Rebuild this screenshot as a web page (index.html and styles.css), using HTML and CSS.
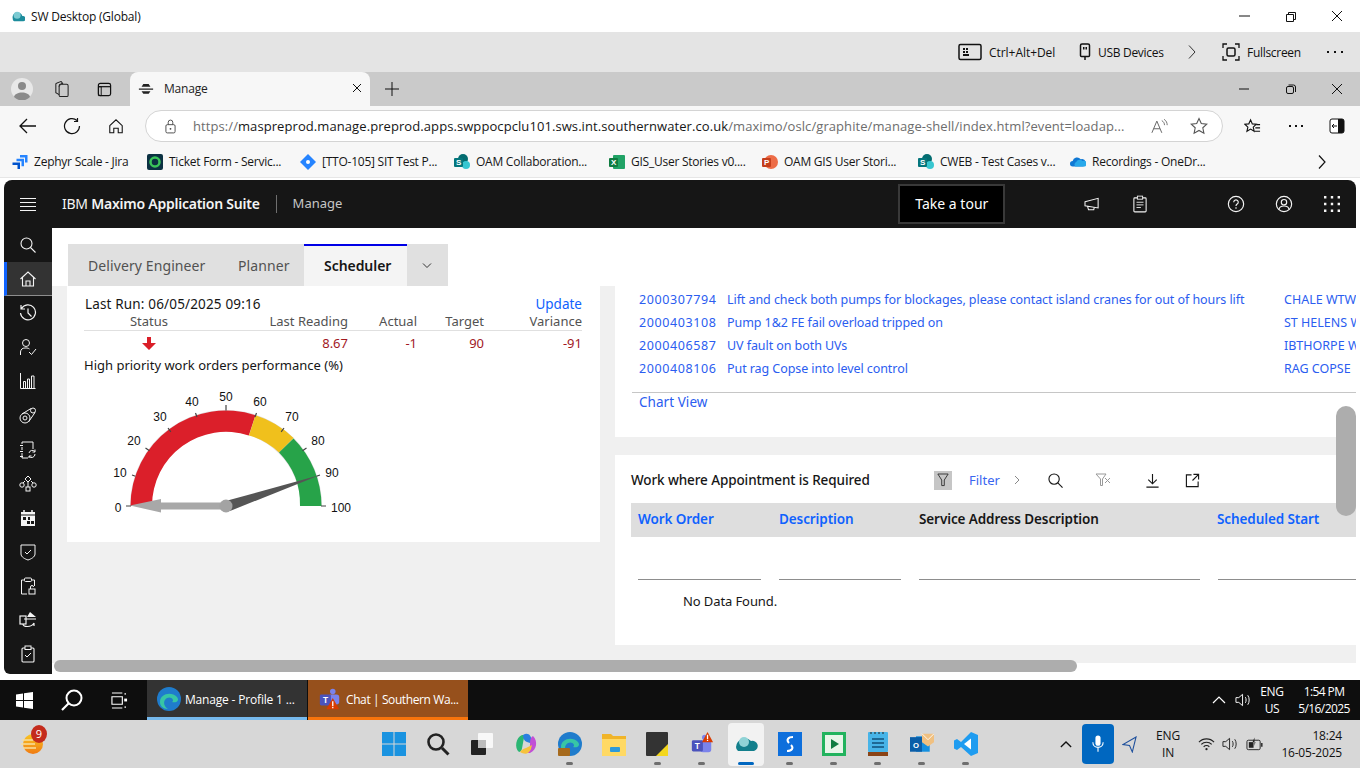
FILE: index.html
```html
<!DOCTYPE html>
<html lang="en">
<head>
<meta charset="utf-8">
<title>SW Desktop (Global)</title>
<link rel="stylesheet" href="styles.css">
</head>
<body>
<div class="screen">
  <header class="titlebar">
    <svg class="ti16" viewBox="0 0 16 16"><path d="M2 11a5.500 5.500 0 0 1 11-3 3 3 0 0 1 1 6H5a3 3 0 0 1-3-3z" fill="#1c8c9c"/><circle cx="7" cy="7" r="4" fill="#7ccad2"/></svg>
    <span class="title-text">SW Desktop (Global)</span>
    <div class="win-btns">
      <svg viewBox="0 0 46 32"><path d="M17 16h11" stroke="#111" fill="none"/></svg>
      <svg viewBox="0 0 46 32"><path d="M18.500 14.500h7v7h-7zM20.500 14.500v-2h7v7h-2" stroke="#111" fill="none"/></svg>
      <svg viewBox="0 0 46 32"><path d="M18 11l10 10M28 11L18 21" stroke="#111" fill="none"/></svg>
    </div>
  </header>

  <div class="vmbar">
    <svg class="vm-kbd" viewBox="0 0 24 18"><rect x="1" y="1.500" width="22" height="15" rx="1.500" fill="none" stroke="#111" stroke-width="1.500"/><path d="M5 5h2v2H5zM8 5h2v2H8zM5 8h2v2H5zM8 8h2v2H8zM5 11h6v2H5z" fill="#111"/></svg>
    <span class="vm-label vm-ctrl">Ctrl+Alt+Del</span>
    <svg class="vm-usb" viewBox="0 0 12 18"><path d="M1.500 2.500a1.500 1.500 0 0 1 1.500-1.500h6a1.500 1.500 0 0 1 1.500 1.500v10a1 1 0 0 1-1 1h-7a1 1 0 0 1-1-1zM6 13.500v3.500" fill="none" stroke="#111" stroke-width="1.500"/><path d="M4 4h1.500v2.500H4zM6.500 4H8v2.500H6.500z" fill="#111"/></svg>
    <span class="vm-label vm-usbt">USB Devices</span>
    <svg class="vm-chev" viewBox="0 0 10 16"><path d="M2 1.500L8 8l-6 6.500" fill="none" stroke="#333"/></svg>
    <svg class="vm-full" viewBox="0 0 18 18"><path d="M1 5V1h4M13 1h4v4M17 13v4h-4M5 17H1v-4" fill="none" stroke="#111" stroke-width="1.300"/><rect x="5" y="5" width="8" height="8" rx="1.500" fill="none" stroke="#111" stroke-width="1.500"/></svg>
    <span class="vm-label vm-fullt">Fullscreen</span>
    <span class="vm-dots"><i></i><i></i><i></i></span>
  </div>

  <div class="tabstrip">
    <svg class="edge-avatar" viewBox="0 0 22 22"><circle cx="11" cy="11" r="11" fill="#e8e8e8"/><circle cx="11" cy="8" r="4" fill="#8a8a8a"/><path d="M3 19c1-6 15-6 16 0a11 11 0 0 1-16 0z" fill="#8a8a8a"/></svg>
    <svg class="edge-coll" viewBox="0 0 18 18"><rect x="6.500" y="4" width="9.500" height="13" rx="1.500" fill="none" stroke="#222" stroke-width="1.100"/><path d="M6.500 15L3 13V4a1 1 0 0 1 .7-1L8 1.200a1 1 0 0 1 1.200.5L10.500 4" fill="none" stroke="#222" stroke-width="1.100"/><path d="M9 2.500c0 3-2.500 1.500-2.500 4" fill="none" stroke="#222"/></svg>
    <svg class="edge-vert" viewBox="0 0 16 16"><rect x="1.500" y="1.500" width="13" height="13" rx="2" fill="none" stroke="#111" stroke-width="1.300"/><path d="M1.500 5h13" stroke="#111" stroke-width="1.300"/><path d="M1.500 5h3v9.500h-3z" fill="none" stroke="#111"/></svg>
    <div class="edge-tab">
      <svg class="bee" viewBox="0 0 18 12"><path d="M6 1h6l2 3H4zM1 6h16v1.500H1zM4 9h10l-2 3H6z" fill="#222"/></svg>
      <span>Manage</span>
      <svg class="tab-x" viewBox="0 0 10 10"><path d="M1 1l8 8M9 1L1 9" stroke="#111" fill="none"/></svg>
    </div>
    <svg class="tab-plus" viewBox="0 0 14 14"><path d="M7 0v14M0 7h14" stroke="#111" fill="none"/></svg>
    <div class="win-btns">
      <svg viewBox="0 0 46 34"><path d="M17 17h10" stroke="#111" fill="none"/></svg>
      <svg viewBox="0 0 46 34"><rect x="18.500" y="14.500" width="7" height="7" rx="1.500" stroke="#111" fill="none"/><path d="M20.500 13h5a2 2 0 0 1 2 2v5" stroke="#111" fill="none"/></svg>
      <svg viewBox="0 0 46 34"><path d="M18 12l10 10M28 12L18 22" stroke="#111" fill="none"/></svg>
    </div>
  </div>

  <div class="addrbar">
    <svg class="nav-back" viewBox="0 0 18 16"><path d="M17 8H1.500M8 1L1 8l7 7" fill="none" stroke="#111" stroke-width="1.300"/></svg>
    <svg class="nav-reload" viewBox="0 0 18 18"><path d="M14 3.500A7.500 7.500 0 1 0 16.500 9M14.500 1v3.500H11" fill="none" stroke="#111" stroke-width="1.200"/></svg>
    <svg class="nav-home" viewBox="0 0 18 18"><path d="M2 8l7-6.500L16 8v8h-4.500v-5h-5v5H2z" fill="none" stroke="#111" stroke-width="1.200"/></svg>
    <div class="pill">
      <svg class="lock" viewBox="0 0 12 16"><rect x="1" y="6" width="10" height="9" rx="1.500" fill="none" stroke="#444"/><path d="M3.500 6V3.500a2.500 2.500 0 0 1 5 0V6" fill="none" stroke="#444"/><circle cx="6" cy="10.500" r="1" fill="#444"/></svg>
      <span class="url"><span class="url-dim">https://</span><span class="url-host">maspreprod.manage.preprod.apps.swppocpclu101.sws.int.southernwater.co.uk</span><span class="url-dim">/maximo/oslc/graphite/manage-shell/index.html?event=loadap...</span></span>
      <svg class="read" viewBox="0 0 20 16"><path d="M1 15L6.500 2 12 15M3 10.500h7" fill="none" stroke="#666" stroke-width="1.100"/><path d="M12 1.500c2 1 3 3 3 5M14.500 0c2.500 1.500 3.500 4 3.500 6.500" fill="none" stroke="#666"/></svg>
      <svg class="star" viewBox="0 0 18 18"><path d="M9 1.500l2.300 5 5.500.6-4 3.700 1.100 5.400L9 13.500l-4.900 2.700 1.100-5.400-4-3.700 5.500-.6z" fill="none" stroke="#555" stroke-width="1.100"/></svg>
    </div>
    <svg class="favs" viewBox="0 0 18 18"><path d="M7 2l1.800 4.200 4.200.4-3.200 3 1 4.400L7 11.700 3.100 14l1-4.400-3.200-3 4.200-.4z" fill="none" stroke="#111" stroke-width="1.200"/><path d="M13 7h4M12 10.500h5M11.500 14h5.500" stroke="#111" stroke-width="1.200"/></svg>
    <span class="addr-dots"><i></i><i></i><i></i></span>
    <svg class="split" viewBox="0 0 16 16"><rect x="1" y="1" width="14" height="14" rx="2" fill="#fff" stroke="#111"/><path d="M9 1h4a2 2 0 0 1 2 2v10a2 2 0 0 1-2 2H9z" fill="#111"/><path d="M8 8H3M5 6L3 8l2 2" stroke="#111" fill="none"/></svg>
  </div>

  <nav class="bookmarks">
    <div class="bm"><svg viewBox="0 0 16 16"><path d="M8 1h7.500v7.500h-2.500V3.500H8z" fill="#2684ff"/><path d="M4.500 4.700h7.500v7.500H9.500V7.200H4.500z" fill="#2684ff"/><path d="M.5 8.500H8V15H5.500v-4H.5z" fill="#0052cc"/></svg><span>Zephyr Scale - Jira</span></div>
    <div class="bm"><svg viewBox="0 0 16 16"><rect width="16" height="16" rx="2" fill="#0b3142"/><circle cx="8" cy="8" r="4.500" fill="none" stroke="#3bc55a" stroke-width="2.500"/></svg><span>Ticket Form - Servic...</span></div>
    <div class="bm"><svg viewBox="0 0 16 16"><path d="M8 0l8 8-8 8-8-8z" fill="#2684ff"/><circle cx="8" cy="8" r="2" fill="#fff"/></svg><span>[TTO-105] SIT Test P...</span></div>
    <div class="bm"><svg viewBox="0 0 16 16"><circle cx="9" cy="5" r="5" fill="#036c70"/><circle cx="12" cy="11" r="4" fill="#37c6d0"/><rect y="4" width="9" height="9" rx="1" fill="#04767c"/><text x="4.500" y="11" class="bm-letter">S</text></svg><span>OAM Collaboration...</span></div>
    <div class="bm"><svg viewBox="0 0 16 16"><rect x="4" y="1" width="12" height="14" rx="1" fill="#21a366"/><rect y="4" width="9" height="9" rx="1" fill="#107c41"/><text x="4.500" y="11" class="bm-letter">X</text></svg><span>GIS_User Stories v0....</span></div>
    <div class="bm"><svg viewBox="0 0 16 16"><circle cx="9" cy="8" r="7" fill="#ed6c47"/><rect y="4" width="9" height="9" rx="1" fill="#c43e1c"/><text x="4.500" y="11" class="bm-letter">P</text></svg><span>OAM GIS User Stori...</span></div>
    <div class="bm"><svg viewBox="0 0 16 16"><circle cx="9" cy="5" r="5" fill="#036c70"/><circle cx="12" cy="11" r="4" fill="#37c6d0"/><rect y="4" width="9" height="9" rx="1" fill="#04767c"/><text x="4.500" y="11" class="bm-letter">S</text></svg><span>CWEB - Test Cases v...</span></div>
    <div class="bm"><svg viewBox="0 0 18 16"><path d="M3 13a3 3 0 0 1 0-6 5 5 0 0 1 9-2 4 4 0 0 1 3 8z" fill="#0f78d4"/><path d="M6 13a3 3 0 0 1 1-5 4 4 0 0 1 7-1 3 3 0 0 1 3 6z" fill="#28a8ea"/></svg><span>Recordings - OneDr...</span></div>
    <svg class="bm-more" viewBox="0 0 10 16"><path d="M2 1.500L8 8l-6 6.500" fill="none" stroke="#111" stroke-width="1.200"/></svg>
  </nav>

  <section class="app-wrap">
    <div class="app">
      <div class="appbar">
        <svg class="ham" viewBox="0 0 16 13"><path d="M0 .5h16M0 4.500h16M0 8.500h16M0 12.500h16" stroke="#f4f4f4" fill="none"/></svg>
        <span class="brand">IBM <b>Maximo Application Suite</b></span>
        <span class="brand-div"></span>
        <span class="brand-app">Manage</span>
        <button class="tour">Take a tour</button>
        <svg class="hd-ico hd-mega" viewBox="0 0 18 16"><path d="M1 5.500l15-4v11l-15-2.500zM4 11l1 3.500h6l.5-2M16 1.500v11" fill="none" stroke="#f4f4f4" stroke-width="1.200"/></svg>
        <svg class="hd-ico hd-clip" viewBox="0 0 16 20"><rect x="1" y="3" width="14" height="16" rx="1" fill="none" stroke="#f4f4f4" stroke-width="1.200"/><rect x="5" y="1" width="6" height="3.500" fill="#161616" stroke="#f4f4f4"/><path d="M4 8h8M4 11h8M4 14h5" stroke="#f4f4f4"/></svg>
        <svg class="hd-ico hd-help" viewBox="0 0 20 20"><circle cx="10" cy="10" r="8.500" fill="none" stroke="#f4f4f4" stroke-width="1.300"/><path d="M7.500 8a2.500 2.500 0 1 1 3.800 2.100c-.9.600-1.300 1-1.300 2" fill="none" stroke="#f4f4f4" stroke-width="1.300"/><circle cx="10" cy="14.500" r=".9" fill="#f4f4f4"/></svg>
        <svg class="hd-ico hd-user" viewBox="0 0 20 20"><circle cx="10" cy="10" r="8.500" fill="none" stroke="#f4f4f4" stroke-width="1.300"/><circle cx="10" cy="8" r="3" fill="none" stroke="#f4f4f4" stroke-width="1.300"/><path d="M4.500 16c.5-5 10.500-5 11 0" fill="none" stroke="#f4f4f4" stroke-width="1.300"/></svg>
        <svg class="hd-ico hd-grid" viewBox="0 0 16 16"><path d="M0 0h2.400v2.400H0zM6.800 0h2.400v2.400H6.800zM13.600 0H16v2.400h-2.400zM0 6.800h2.400v2.400H0zM6.800 6.800h2.400v2.400H6.800zM13.600 6.800H16v2.400h-2.400zM0 13.600h2.400V16H0zM6.800 13.600h2.400V16H6.800zM13.600 13.600H16V16h-2.400z" fill="#f4f4f4"/></svg>
      </div>
      <div class="app-body">
        <aside class="rail">
          <div class="rail-item"><svg viewBox="0 0 16 16"><circle cx="6.500" cy="6.500" r="5.500" fill="none" stroke="#f4f4f4" stroke-width="1.100"/><path d="M10.500 10.500L15.500 15.500" stroke="#f4f4f4" stroke-width="1.100"/></svg></div>
          <div class="rail-item rail-active"><svg viewBox="0 0 16 16"><path d="M.5 8L8 1l7.500 7M2.500 6.500V15h11V6.500M6 15v-5h4v5" fill="none" stroke="#f4f4f4" stroke-width="1.100"/></svg></div>
          <div class="rail-item"><svg class="r18" viewBox="0 0 18 18"><path d="M2.500 4.500A7.500 7.500 0 1 1 1.500 9M2 1v4h4M9 4.500V9l3.500 3.500" fill="none" stroke="#f4f4f4" stroke-width="1.200"/></svg></div>
          <div class="rail-item"><svg class="r18" viewBox="0 0 18 18"><circle cx="7" cy="5" r="3.500" fill="none" stroke="#f4f4f4"/><path d="M1.500 17v-3a4.500 4.500 0 0 1 4.500-4h2a5 5 0 0 1 2.500 1M10 14l2.500 2.500L17 11" fill="none" stroke="#f4f4f4"/></svg></div>
          <div class="rail-item"><svg viewBox="0 0 16 16"><path d="M.5 0v15.500H15.500" fill="none" stroke="#f4f4f4"/><path d="M3.500 8.500h2v7h-2zM7.500 6h2v9.500h-2zM11.500 3h2.500v12.500h-2.500z" fill="none" stroke="#f4f4f4"/></svg></div>
          <div class="rail-item"><svg class="r18" viewBox="0 0 18 18"><circle cx="6" cy="11" r="5" fill="none" stroke="#f4f4f4"/><circle cx="6" cy="11" r="2" fill="none" stroke="#f4f4f4"/><circle cx="14" cy="3.500" r="2.500" fill="none" stroke="#f4f4f4"/><path d="M3 7l9-5.500M9.500 15l6.500-9.500" fill="none" stroke="#f4f4f4"/></svg></div>
          <div class="rail-item"><svg class="r18" viewBox="0 0 16 18"><path d="M2 3V1h11v7M2 6v3M2 12v5h6M0 4.500h3M0 10.500h3M0 15.500h3" fill="none" stroke="#f4f4f4"/><path d="M15 13a3.500 3.500 0 0 1-6 2.500M9 12a3.500 3.500 0 0 1 6-1.500M15 8.500V11h-2.500M9 17v-2h2.500" fill="none" stroke="#f4f4f4"/></svg></div>
          <div class="rail-item"><svg class="r18" viewBox="0 0 18 16"><path d="M9 0l3 3-3 3-3-3zM9 6v5M6 5L4 7M12 5l2 2" fill="none" stroke="#f4f4f4"/><circle cx="3" cy="9" r="2.200" fill="none" stroke="#f4f4f4"/><circle cx="15" cy="9" r="2.200" fill="none" stroke="#f4f4f4"/><rect x="7" y="11" width="4" height="4" fill="none" stroke="#f4f4f4"/></svg></div>
          <div class="rail-item"><svg viewBox="0 0 16 16"><path d="M1 2h14v14H1z" fill="#f4f4f4"/><path d="M4 0v3M12 0v3" stroke="#f4f4f4" stroke-width="1.500"/><path d="M1 5h14" stroke="#161616"/><path d="M3 7h3v3H3zM8 7h2v3H8zM7 11h3v3H7zM11 11h3v3h-3z" fill="#161616"/></svg></div>
          <div class="rail-item"><svg class="r18" viewBox="0 0 16 18"><path d="M1 2h14v9c0 3-4 5-7 6-3-1-7-3-7-6z" fill="none" stroke="#f4f4f4"/><path d="M5 9l2 2 4-4" fill="none" stroke="#f4f4f4"/></svg></div>
          <div class="rail-item"><svg class="r18" viewBox="0 0 16 18"><path d="M4 3H1.500v14H7M12 3h2.500v6" fill="none" stroke="#f4f4f4"/><rect x="4.500" y="1" width="7" height="3.500" rx="1" fill="none" stroke="#f4f4f4"/><rect x="9" y="12" width="6" height="5" fill="none" stroke="#f4f4f4"/><path d="M10.500 12v-2a1.500 1.500 0 0 1 3 0" fill="none" stroke="#f4f4f4"/></svg></div>
          <div class="rail-item"><svg class="r18" viewBox="0 0 18 18"><rect x="1" y="5" width="6" height="8" fill="none" stroke="#f4f4f4" stroke-width="1.200"/><path d="M11 1l6 5H8z" fill="#f4f4f4"/><path d="M8 8h9M4 13c0 3 8 4 11-1M15 12v3M13 8h-8" fill="none" stroke="#f4f4f4" stroke-width="1.200"/></svg></div>
          <div class="rail-item"><svg class="r18" viewBox="0 0 14 18"><rect x="1" y="3" width="12" height="14" rx="1" fill="none" stroke="#f4f4f4" stroke-width="1.100"/><rect x="4" y="1" width="6" height="3.500" fill="#161616" stroke="#f4f4f4"/><path d="M4 10l2 2 4-4" fill="none" stroke="#f4f4f4"/></svg></div>
        </aside>
        <main class="main">
          <div class="tabs">
            <div class="tab tab-de">Delivery Engineer</div>
            <div class="tab tab-pl">Planner</div>
            <div class="tab tab-on">Scheduler</div>
            <div class="tab tab-more"><svg viewBox="0 0 10 6"><path d="M1 .5L5 4.500 9 .5" fill="none" stroke="#333"/></svg></div>
          </div>
          <div class="columns">
            <article class="card-left">
              <div class="run-row"><span class="run-text">Last Run: 06/05/2025 09:16</span><a class="update">Update</a></div>
              <div class="kpi-grid kpi-head">
                <span class="kpi-status">Status</span><span>Last Reading</span><span>Actual</span><span>Target</span><span>Variance</span>
              </div>
              <div class="kpi-grid kpi-data">
                <span class="kpi-status"><svg class="down" viewBox="0 0 14 13"><path d="M5 0h4v6h5l-7 7-7-7h5z" fill="#da1e28"/></svg></span><span>8.67</span><span>-1</span><span>90</span><span>-91</span>
              </div>
              <div class="kpi-title">High priority work orders performance (%)</div>
              <svg class="gauge" viewBox="84 385 300 140">
                <path d="M130 506A96 96 0 0 1 322 506H300.500A74.500 74.500 0 0 0 151.500 506z" fill="#e1dfe0"/>
                <path d="M130.500 506a95.500 95.500 0 0 1 125-90.800l-6.700 20.200A74 74 0 0 0 152 506z" fill="#db1f2a"/>
                <path d="M255.500 415.200a95.500 95.500 0 0 1 38 22.800L279 452.500a74 74 0 0 0-30-17.100z" fill="#f0c01c"/>
                <path d="M293.500 438.500A95.500 95.500 0 0 1 321.500 506H300a74 74 0 0 0-21-53.500z" fill="#27a349"/>
                <path d="M126 506h5M321 506h5M132 475l3.500 1.200M145.500 448l4 2.800M168 428l2.800 3.800M195.500 413l1.500 4M226 405v5.500M256.500 413l-1.500 4M284 428l-2.800 3.800M306.500 448l-4 2.800M320 475l-3.500 1.200" stroke="#444" stroke-width="1.200" fill="none"/>
                <g class="g-label">
                  <text x="118" y="512">0</text><text x="120" y="477">10</text><text x="134" y="445">20</text><text x="160" y="421">30</text><text x="192" y="406">40</text><text x="226" y="401">50</text><text x="260" y="406">60</text><text x="292" y="421">70</text><text x="318" y="445">80</text><text x="332" y="477">90</text><text x="341" y="512">100</text>
                </g>
                <path d="M320 475L230 511 222 502z" fill="#555"/>
                <path d="M130 505.500L161 499v3.500h60v7h-60v3z" fill="#a8a8a8"/>
                <circle cx="226" cy="506" r="6.500" fill="#a3a3a3"/>
              </svg>
            </article>
            <div class="col-right">
              <article class="card-wo">
                <div class="wo-row"><span class="wo-num">2000307794</span><span class="wo-desc">Lift and check both pumps for blockages, please contact island cranes for out of hours lift</span><span>CHALE WTW</span></div>
                <div class="wo-row"><span class="wo-num">2000403108</span><span class="wo-desc">Pump 1&amp;2 FE fail overload tripped on</span><span>ST HELENS W</span></div>
                <div class="wo-row"><span class="wo-num">2000406587</span><span class="wo-desc">UV fault on both UVs</span><span>IBTHORPE W</span></div>
                <div class="wo-row"><span class="wo-num">2000408106</span><span class="wo-desc">Put rag Copse into level control</span><span>RAG COPSE</span></div>
                <div class="wo-foot"><a>Chart View</a></div>
              </article>
              <article class="card-appt">
                <div class="appt-tools">
                  <h2>Work where Appointment is Required</h2>
                  <span class="flt-btn"><svg viewBox="0 0 14 16"><path d="M1 1h12L8.500 8v6.500h-3V8z" fill="none" stroke="#333" stroke-width="1.100"/></svg></span>
                  <a class="flt-link">Filter</a>
                  <svg class="flt-chev" viewBox="0 0 6 10"><path d="M1 1l4 4-4 4" fill="none" stroke="#888"/></svg>
                  <svg class="t-search" viewBox="0 0 16 16"><circle cx="6.500" cy="6.500" r="5.500" fill="none" stroke="#161616" stroke-width="1.200"/><path d="M10.500 10.500L15.500 15.500" stroke="#161616" stroke-width="1.200"/></svg>
                  <svg class="t-clear" viewBox="0 0 16 16"><path d="M1 2h10L7.500 7v6.500h-2V7zM10 6l5 5M15 6l-5 5" fill="none" stroke="#999"/></svg>
                  <svg class="t-dl" viewBox="0 0 16 16"><path d="M8 1v10M3.500 7L8 11.500 12.500 7M1.500 15h13" fill="none" stroke="#161616" stroke-width="1.200"/></svg>
                  <svg class="t-open" viewBox="0 0 16 16"><path d="M7 2H1.500v12.500H14V9M9 1.500h5.500V7M14.500 1.500L8 8" fill="none" stroke="#161616" stroke-width="1.200"/></svg>
                </div>
                <div class="appt-head"><a>Work Order</a><a>Description</a><span>Service Address Description</span><a>Scheduled Start</a></div>
                <div class="appt-filters"><i></i><i></i><i></i><i></i></div>
                <div class="no-data">No Data Found.</div>
              </article>
            </div>
          </div>
        </main>
        <div class="sb-h"></div>
        <div class="sb-v"></div>
      </div>
    </div>
  </section>

  <footer class="task1">
    <svg class="t1-win" viewBox="0 0 17 17"><path d="M0 2.400l7-1V8H0zM8 1.200L17 0v8H8zM0 9h7v6.600l-7-1zM8 9h9v8l-9-1.200z" fill="#fff"/></svg>
    <svg class="t1-search" viewBox="0 0 24 24"><circle cx="14" cy="10" r="7.500" fill="none" stroke="#fff" stroke-width="2"/><path d="M8.500 15.500L2 22" stroke="#fff" stroke-width="2.200"/></svg>
    <svg class="t1-view" viewBox="0 0 18 20"><path d="M1 6h11v8H1zM1 2h11M1 18h11M15 2v2M15 16v2" fill="none" stroke="#fff" stroke-width="1.200"/><rect x="14" y="8" width="3" height="3" fill="#fff"/></svg>
    <div class="task-btn task-edge">
      <svg viewBox="0 0 24 24"><circle cx="12" cy="12" r="12" fill="#1f7ccc"/><path d="M3 15C3 7 14 4 20 10c3 4-1 6-5 5 3-2-1-6-5-4-4 2-4 8 1 11-5 0-8-3-8-7z" fill="#37c6a5"/></svg>
      <span>Manage - Profile 1 ...</span>
    </div>
    <div class="task-btn task-teams">
      <svg viewBox="0 0 26 26"><circle cx="16" cy="5" r="3" fill="#7b83eb"/><rect x="11" y="8" width="12" height="11" rx="3" fill="#7b83eb"/><rect x="2" y="8" width="12" height="12" rx="1.500" fill="#4b53bc"/><text x="8" y="17.500" class="bm-letter t-letter">T</text><path d="M16 12l7 12H9z" fill="#d83b01"/><path d="M15.300 15.500h1.400v5h-1.400zM15.300 21.500h1.400v1.400h-1.400z" fill="#fff"/></svg>
      <span>Chat | Southern Wa...</span>
    </div>
    <div class="tray1">
      <svg class="t1-up" viewBox="0 0 14 8"><path d="M1 7l6-6 6 6" fill="none" stroke="#fff" stroke-width="1.200"/></svg>
      <svg class="t1-vol" viewBox="0 0 18 16"><path d="M1 5.500h3L8 2v12l-4-3.500H1zM11 5c1 1.500 1 4.500 0 6M13.500 3c2 2.500 2 7.500 0 10" fill="none" stroke="#fff"/></svg>
      <div class="t1-lang"><span>ENG</span><span>US</span></div>
      <div class="t1-clock"><span>1:54 PM</span><span>5/16/2025</span></div>
    </div>
  </footer>

  <footer class="task2">
    <div class="weather">
      <svg viewBox="0 0 24 24"><defs><linearGradient id="sun" x1="0" y1="0" x2="0" y2="1"><stop offset="0" stop-color="#f9c623"/><stop offset="1" stop-color="#f07a12"/></linearGradient></defs><circle cx="13" cy="12" r="10" fill="url(#sun)"/><path d="M2 8h14M1 12h14M3 16h13" stroke="#f8e0a0" stroke-width="1.500"/></svg>
      <span class="w-badge">9</span>
    </div>
    <div class="task-icons">
      <div class="slot"><svg viewBox="0 0 24 24"><path d="M0 0h11.500v11.500H0zM12.500 0H24v11.500H12.500zM0 12.500h11.500V24H0zM12.500 12.500H24V24H12.500z" fill="#1a93e0"/></svg></div>
      <div class="slot"><svg viewBox="0 0 24 24"><circle cx="10" cy="10" r="7.500" fill="none" stroke="#222" stroke-width="2.600"/><path d="M16 16l6.500 6.500" stroke="#222" stroke-width="3"/></svg></div>
      <div class="slot"><svg viewBox="0 0 24 24"><rect x="8" y="1" width="15" height="15" rx="1" fill="#f8f8f8"/><rect x="1" y="8" width="15" height="15" rx="1" fill="#222"/><rect x="8" y="8" width="8" height="8" fill="#bcbcbc"/></svg></div>
      <div class="slot"><svg viewBox="0 0 24 24"><path d="M5 20C0 16 2 5 8 3h6c-4 0-4 3-5 8s-1 9-4 9z" fill="#2bb673"/><path d="M9 3c5-3 8 0 9 6l1 3-6-2C10 9 9 6 9 3z" fill="#2a7fe0"/><path d="M19 4c5 5 4 14-3 17h-5c4-1 5-4 5-9s1-7 3-8z" fill="#c14fd6"/><path d="M6 20c5 3 9 2 11-3l1-4-6 3c-3 1-5 2-6 4z" fill="#f6c23c"/></svg></div>
      <div class="slot slot-dot"><svg viewBox="0 0 24 24"><circle cx="12" cy="12" r="12" fill="#1f7ccc"/><path d="M3 15C3 7 14 4 20 10c3 4-1 6-5 5 3-2-1-6-5-4-4 2-4 8 1 11-5 0-8-3-8-7z" fill="#37c6a5"/><rect x="0" y="16" width="12" height="8" rx="1" fill="#a66a1d"/></svg></div>
      <div class="slot"><svg viewBox="0 0 24 24"><path d="M0 2h9l2 2h13v20H0z" fill="#f0b429"/><rect y="7" width="24" height="17" fill="#ffd964"/><rect x="8" y="15" width="10" height="5" rx="1" fill="#2e9ad9"/></svg></div>
      <div class="slot slot-dot"><svg viewBox="0 0 24 24"><rect width="22" height="24" rx="1" fill="#333"/><path d="M10 24l12-12v12z" fill="#f4d71c"/></svg></div>
      <div class="slot slot-dot"><svg viewBox="0 0 26 26"><circle cx="16" cy="6" r="3" fill="#7b83eb"/><rect x="11" y="9" width="12" height="13" rx="3" fill="#7b83eb"/><rect x="2" y="9" width="12" height="12" rx="1.500" fill="#4b53bc"/><text x="8" y="18.500" class="bm-letter t-letter">T</text><path d="M19 0l6 11H13z" fill="#d83b01"/><path d="M18.300 3h1.400v4.500h-1.400zM18.300 8.300h1.400v1.400h-1.400z" fill="#fff"/></svg></div>
      <div class="slot slot-dot slot-active"><svg viewBox="0 0 24 24"><path d="M4 19a5 5 0 0 1-2-4 9 9 0 0 1 15-6 5 5 0 0 1 3 10z" fill="#137f8c"/><circle cx="10" cy="10" r="5" fill="#8fd3d6"/></svg></div>
      <div class="slot slot-dot"><svg viewBox="0 0 24 24"><rect width="24" height="24" fill="#0e6fdc"/><path d="M15 5c-5 0-7 3-4 6M9 19c5 0 7-3 4-6" fill="none" stroke="#fff" stroke-width="2"/></svg></div>
      <div class="slot slot-dot"><svg viewBox="0 0 24 24"><rect width="24" height="24" fill="#22b35e"/><rect x="3" y="3" width="18" height="18" fill="#e8f5e9"/><path d="M9 7l8 5-8 5z" fill="#107c41"/></svg></div>
      <div class="slot slot-dot"><svg viewBox="0 0 20 24"><rect width="20" height="20" rx="1" fill="#47b4e8"/><rect y="20" width="20" height="4" fill="#8a4417"/><path d="M4 7h12M4 11h12M4 15h12" stroke="#12507a" stroke-width="1.500"/><path d="M3 0v2M7 0v2M11 0v2M15 0v2" stroke="#222"/></svg></div>
      <div class="slot slot-dot"><svg viewBox="0 0 28 24"><path d="M7 3h16v18H7z" fill="#1490df"/><path d="M14 0h14v10l-7 5-7-5z" fill="#f0c080"/><path d="M14 0l7 7 7-7" fill="none" stroke="#fff"/><rect x="0" y="4" width="14" height="17" fill="#0a5ea8"/><text x="7" y="17" class="bm-letter t-letter">O</text></svg></div>
      <div class="slot slot-dot"><svg viewBox="0 0 24 24"><path d="M17 0l7 3v18l-7 3-10-9-4 3-3-1.500V8.500L3 7l4 3z" fill="#1f9cf0"/><path d="M17 6.500L10 12l7 5.500z" fill="#fff"/></svg></div>
    </div>
    <svg class="t2-up" viewBox="0 0 14 8"><path d="M1 7l6-6 6 6" fill="none" stroke="#111" stroke-width="1.500"/></svg>
    <div class="mic"><svg viewBox="0 0 14 20"><rect x="4" y="0" width="6" height="12" rx="3" fill="#fff"/><path d="M1 8c0 8 12 8 12 0M7 14v5" fill="none" stroke="#fff" stroke-width="1.300"/></svg></div>
    <svg class="t2-nav" viewBox="0 0 16 18"><path d="M15 1L1 9l7 1 3 7z" fill="none" stroke="#1d4f9c" stroke-width="1.100"/></svg>
    <div class="t2-lang"><span>ENG</span><span>IN</span></div>
    <svg class="t2-wifi" viewBox="0 0 18 14"><path d="M1 5a11 11 0 0 1 16 0M3.500 7.500a7.500 7.500 0 0 1 11 0M6 10a4 4 0 0 1 6 0" fill="none" stroke="#222" stroke-width="1.200"/><circle cx="9" cy="12.500" r="1.200" fill="#222"/></svg>
    <svg class="t2-vol" viewBox="0 0 18 16"><path d="M1 5.500h3L8 2v12l-4-3.500H1zM11 5c1 1.500 1 4.500 0 6M13.500 3c2 2.500 2 7.500 0 10" fill="none" stroke="#222"/></svg>
    <svg class="t2-bat" viewBox="0 0 18 14"><rect x="1" y="3" width="14" height="10" rx="1.500" fill="none" stroke="#222"/><path d="M3 5h5v6H3z" fill="#222"/><path d="M16 6h1.500v4H16zM9 0L7 5h3l-1 4" fill="#222"/></svg>
    <div class="t2-clock"><span>18:24</span><span>16-05-2025</span></div>
  </footer>
</div>
</body>
</html>
```

FILE: styles.css
```css
* { box-sizing: border-box; }
html, body { margin: 0; padding: 0; }
body { width: 1360px; height: 768px; overflow: hidden; background: #fff; font-family: "Open Sans", "Noto Sans", sans-serif; }
svg { display: block; flex: none; }
a { color: inherit; text-decoration: none; }
.screen { width: 1360px; height: 768px; display: flex; flex-direction: column; }

.titlebar { height: 32px; flex: none; display: flex; align-items: center; padding-left: 11px; background: #fff; }
.ti16 { width: 14px; height: 14px; }
.title-text { margin-left: 6px; font-size: 12px; letter-spacing: -.2px; color: #111; }
.win-btns { margin-left: auto; display: flex; padding-right: 0; }
.win-btns svg { width: 46px; }
.titlebar .win-btns svg { height: 32px; }
.tabstrip .win-btns svg { height: 34px; }

.vmbar { height: 40px; flex: none; background: #e4e4e4; display: flex; align-items: center; padding-left: 958px; color: #111; }
.vm-kbd { width: 24px; height: 18px; }
.vm-label { font-size: 12px; letter-spacing: -.3px; white-space: nowrap; }
.vm-ctrl { margin-left: 7px; width: 67px; letter-spacing: -.05px; }
.vm-usb { width: 12px; height: 18px; margin-left: 23px; }
.vm-usbt { margin-left: 7px; width: 65px; }
.vm-chev { width: 10px; height: 16px; margin-left: 24px; }
.vm-full { width: 18px; height: 18px; margin-left: 25px; }
.vm-fullt { margin-left: 7px; width: 53px; }
.vm-dots { display: flex; gap: 5px; margin-left: 27px; }
.vm-dots i, .addr-dots i { width: 2px; height: 2px; background: #111; display: block; }

.tabstrip { height: 34px; flex: none; background: #cacaca; display: flex; align-items: flex-end; padding-left: 11px; }
.edge-avatar { width: 22px; height: 22px; margin-bottom: 6px; }
.edge-coll { width: 17px; height: 18px; margin: 0 0 8px 20px; }
.edge-vert { width: 15px; height: 15px; margin: 0 0 9px 27px; }
.edge-tab { width: 240px; height: 34px; margin-left: 18px; background: #f7f7f7; border-radius: 8px 8px 0 0; display: flex; align-items: center; padding: 0 8px 2px 8px; font-size: 12px; letter-spacing: -.2px; color: #222; }
.bee { width: 16px; height: 11px; }
.edge-tab span { margin-left: 10px; flex: 1; }
.tab-x { width: 10px; height: 10px; }
.tab-plus { width: 14px; height: 14px; margin: 0 0 10px 15px; }
.tabstrip .win-btns { align-self: stretch; }

.addrbar { height: 40px; flex: none; background: #f7f7f7; display: flex; align-items: center; padding-left: 19px; }
.nav-back { width: 18px; height: 16px; }
.nav-reload { width: 18px; height: 18px; margin-left: 26px; }
.nav-home { width: 16px; height: 17px; margin-left: 27px; }
.pill { width: 1078px; height: 32px; margin-left: 21px; background: #fff; border: 1px solid #d4d4d4; border-radius: 16px; display: flex; align-items: center; padding-left: 19px; }
.lock { width: 11px; height: 15px; }
.url { margin-left: 17px; font-size: 13px; white-space: nowrap; letter-spacing: .08px; width: 935px; flex: none; }
.url-dim { color: #6d6d6d; }
.url-host { color: #161616; }
.read { width: 18px; height: 15px; margin-left: 23px; }
.star { width: 18px; height: 18px; margin-left: 21px; }
.favs { width: 17px; height: 17px; margin-left: 21px; }
.addr-dots { display: flex; gap: 4px; margin-left: 28px; }
.split { width: 16px; height: 16px; margin-left: 26px; }

.bookmarks { height: 32px; flex: none; background: #f7f7f7; border-bottom: 1px solid #e6e6e6; display: grid; grid-template-columns: 135px 153px 154px 155px 153px 156px 152px 247px 10px; align-items: center; padding-left: 12px; }
.bm { display: flex; align-items: center; gap: 6px; font-size: 12px; letter-spacing: -.24px; color: #161616; white-space: nowrap; }
.bm svg { width: 16px; height: 16px; }
.bm-letter { font: 700 8px "Liberation Sans", sans-serif; fill: #fff; text-anchor: middle; }
.t-letter { font-size: 9px; }
.bm-more { width: 10px; height: 16px; }

.app-wrap { height: 502px; flex: none; background: #fff; padding: 2px 4px 0; }
.app { height: 500px; display: flex; flex-direction: column; position: relative; }
.appbar { height: 48px; flex: none; background: #161616; border-radius: 8px 8px 0 0; display: flex; align-items: center; padding-left: 16px; color: #f4f4f4; }
.ham { width: 16px; height: 13px; }
.brand { margin-left: 26px; padding-bottom: 2px; font: 14px "Noto Sans", sans-serif; letter-spacing: -.24px; white-space: nowrap; }
.brand b { font-weight: 600; }
.brand-div { width: 1px; height: 18px; background: #6f6f6f; margin-left: 16px; }
.brand-app { margin-left: 16px; padding-bottom: 2px; font: 13px "Noto Sans", sans-serif; color: #c6c6c6; }
.tour { margin-left: 556px; width: 107px; height: 40px; background: #000; border: 2px solid #393939; color: #fff; font: 14px "Noto Sans", sans-serif; padding: 0 0 2px; }
.hd-ico { display: block; }
.hd-mega { width: 16px; height: 14px; margin-left: 79px; }
.hd-clip { width: 14px; height: 18px; margin-left: 33px; }
.hd-help { width: 18px; height: 18px; margin-left: 80px; }
.hd-user { width: 18px; height: 18px; margin-left: 30px; }
.hd-grid { width: 16px; height: 16px; margin-left: 31px; }

.app-body { flex: 1; min-height: 0; display: flex; position: relative; }
.rail { width: 48px; height: 446px; flex: none; background: #161616; border-radius: 0 0 0 6px; }
.rail-item { height: 34.100px; display: flex; align-items: center; justify-content: center; position: relative; }
.rail-item svg { width: 16px; height: 16px; }
.rail-item .r18 { width: 18px; height: 18px; }
.rail-active { background: #333; border-left: 3px solid #0f62fe; border-bottom: 1px solid #8d8d8d; padding-right: 3px; }

.main { flex: 1; min-width: 0; height: 435px; overflow: hidden; background: #f0f0f0; font-family: "Noto Sans", sans-serif; }
.tabs { height: 58px; padding: 16px 0 0 16px; background: #fff; display: grid; grid-template-columns: 150px 86px 103px 41px; }
.tab { background: #e0e0e0; font-size: 14px; display: flex; align-items: center; padding-left: 20px; color: #525252; letter-spacing: .1px; white-space: nowrap; }
.tab-on { background: #f4f4f4; border-top: 2px solid #0000e6; padding-bottom: 2px; color: #161616; font-weight: 600; letter-spacing: -.05px; }
.tab-more { padding: 2px 0 0 15px; }
.tab-more svg { width: 10px; height: 6px; }

.columns { display: grid; grid-template-columns: 533px 741px; gap: 15px; padding-left: 15px; }
.card-left { height: 256px; background: #fff; padding: 9px 18px 0 17px; }
.run-row { height: 17px; display: flex; justify-content: space-between; align-items: center; font-size: 13.500px; color: #161616; letter-spacing: .16px; }
.run-text { margin-left: 1px; }
.update { color: #0f62fe; font-size: 13.500px; letter-spacing: 0; }
.kpi-grid { display: grid; grid-template-columns: 130px 134px 69px 67px 98px; text-align: right; font-size: 13px; white-space: nowrap; }
.kpi-head { height: 19px; align-items: center; padding-bottom: 3px; color: #525252; border-bottom: 1px solid #e0e0e0; }
.kpi-data { height: 24px; align-items: center; color: #a2191f; font-size: 13px; }
.kpi-status { text-align: center; display: flex; justify-content: center; }
.down { width: 14px; height: 13px; }
.kpi-title { height: 20px; line-height: 20px; font-size: 13px; color: #161616; }
.gauge { width: 300px; height: 140px; margin-top: 10px; }
.g-label text { font: 12px "Liberation Sans", sans-serif; fill: #111; text-anchor: middle; }

.col-right { display: flex; flex-direction: column; gap: 18px; }
.card-wo { height: 151px; background: #fff; padding: 2px 0 0 24px; color: #2b5df0; font-size: 12.500px; }
.wo-row { height: 23px; display: grid; grid-template-columns: 88px 557px 1fr; align-items: center; white-space: nowrap; overflow: hidden; }
.wo-num { letter-spacing: .6px; }
.wo-desc { letter-spacing: -.07px; }
.wo-foot { margin: 12px 0 0 -7px; border-top: 1px solid #c6c6c6; height: 24px; line-height: 18px; padding-left: 7px; font-size: 13.500px; letter-spacing: .05px; }
.card-appt { height: 190px; background: #fff; padding-left: 16px; }
.appt-tools { height: 48px; display: flex; align-items: center; padding-top: 2px; }
.appt-tools h2 { margin: 0; width: 303px; font-size: 13.500px; font-weight: 500; color: #161616; white-space: nowrap; letter-spacing: -.1px; }
.flt-btn { width: 18px; height: 19px; background: #c6c6c6; display: flex; align-items: center; justify-content: center; }
.flt-btn svg { width: 12px; height: 14px; }
.flt-link { margin-left: 17px; width: 45px; color: #3a66f0; font-size: 13px; }
.flt-chev { width: 6px; height: 10px; }
.t-search { width: 15px; height: 15px; margin-left: 28px; }
.t-clear { width: 16px; height: 16px; margin-left: 32px; }
.t-dl { width: 15px; height: 15px; margin-left: 34px; }
.t-open { width: 15px; height: 15px; margin-left: 25px; }
.appt-head { height: 34px; background: #dedede; display: grid; grid-template-columns: 141px 140px 298px 1fr; align-items: center; padding: 0 0 2px 7px; font-size: 13.500px; font-weight: 600; color: #161616; white-space: nowrap; letter-spacing: -.1px; }
.appt-head a { color: #0f62fe; }
.appt-filters { height: 43px; display: grid; grid-template-columns: 123px 122px 281px 138px; column-gap: 18px; margin-left: 7px; align-items: end; }
.appt-filters i { display: block; height: 1px; background: #8d8d8d; }
.no-data { margin: 12px 0 0 52px; font-size: 13px; color: #161616; letter-spacing: -.1px; }

.sb-h { position: absolute; left: 50px; top: 432px; width: 1023px; height: 12px; border-radius: 6px; background: #adadad; }
.sb-v { position: absolute; right: 0; top: 178px; width: 20px; height: 110px; border-radius: 10px; background: #adadad; }

.task1 { height: 40px; flex: none; background: #0e0e0e; display: flex; align-items: center; padding-left: 16px; color: #fff; }
.t1-win { width: 17px; height: 17px; }
.t1-search { width: 24px; height: 24px; margin-left: 27px; }
.t1-view { width: 17px; height: 19px; margin-left: 27px; }
.task-btn { width: 160px; height: 40px; display: flex; align-items: center; gap: 4px; padding: 1px 0 0 10px; font-size: 12px; white-space: nowrap; }
.task-btn svg { width: 24px; height: 24px; }
.task-edge { margin-left: 19px; background: #333; border-bottom: 3px solid #76b9ed; letter-spacing: -.18px; }
.task-teams { margin-left: 1px; background: #96501c; border-bottom: 3px solid #f7740c; letter-spacing: -.4px; }
.tray1 { margin-left: auto; display: flex; align-items: center; padding-right: 6px; font-size: 12px; letter-spacing: -.6px; }
.t1-up { width: 14px; height: 8px; }
.t1-vol { width: 17px; height: 16px; margin-left: 9px; }
.t1-lang, .t1-clock, .t2-lang, .t2-clock { display: flex; flex-direction: column; align-items: center; }
.t1-lang { width: 30px; margin-left: 5px; line-height: 17px; letter-spacing: -.3px; }
.t1-clock { width: 60px; margin-left: 7px; line-height: 17px; }

.task2 { height: 48px; flex: none; background: #d7d7d7; display: flex; align-items: center; }
.weather { width: 24px; height: 24px; margin-left: 20px; position: relative; }
.weather svg { width: 24px; height: 24px; }
.w-badge { position: absolute; left: 11px; top: -7px; width: 16px; height: 18px; border-radius: 50%; background: #c42b1c; color: #fff; font-size: 11px; line-height: 18px; text-align: center; }
.task-icons { display: flex; margin-left: 328px; align-self: stretch; }
.slot { width: 44px; display: flex; align-items: center; justify-content: center; position: relative; }
.slot svg { width: 24px; height: 24px; }
.slot-dot::after { content: ""; position: absolute; left: 18px; bottom: 3px; width: 7px; height: 3px; border-radius: 2px; background: #6e6e6e; }
.slot-active::before { content: ""; position: absolute; left: 4px; top: 3px; width: 36px; height: 43px; border-radius: 4px; background: #f2f2f2; }
.slot-active svg { position: relative; }
.slot-active::after { background: #0067c0; width: 16px; left: 14px; }
.t2-up { width: 12px; height: 7px; margin-left: 72px; }
.mic { width: 32px; height: 40px; margin-left: 10px; background: #0067c0; border-radius: 4px; display: flex; align-items: center; justify-content: center; }
.mic svg { width: 12px; height: 18px; }
.t2-nav { width: 15px; height: 17px; margin-left: 8px; }
.t2-lang { width: 40px; margin-left: 11px; font-size: 12px; line-height: 17px; letter-spacing: -.2px; color: #111; }
.t2-wifi { width: 17px; height: 14px; margin-left: 10px; }
.t2-vol { width: 17px; height: 16px; margin-left: 7px; }
.t2-bat { width: 17px; height: 14px; margin-left: 7px; }
.t2-clock { width: 70px; margin-left: 9px; align-items: flex-end; font-size: 12px; line-height: 17px; letter-spacing: -.2px; color: #111; }
```
